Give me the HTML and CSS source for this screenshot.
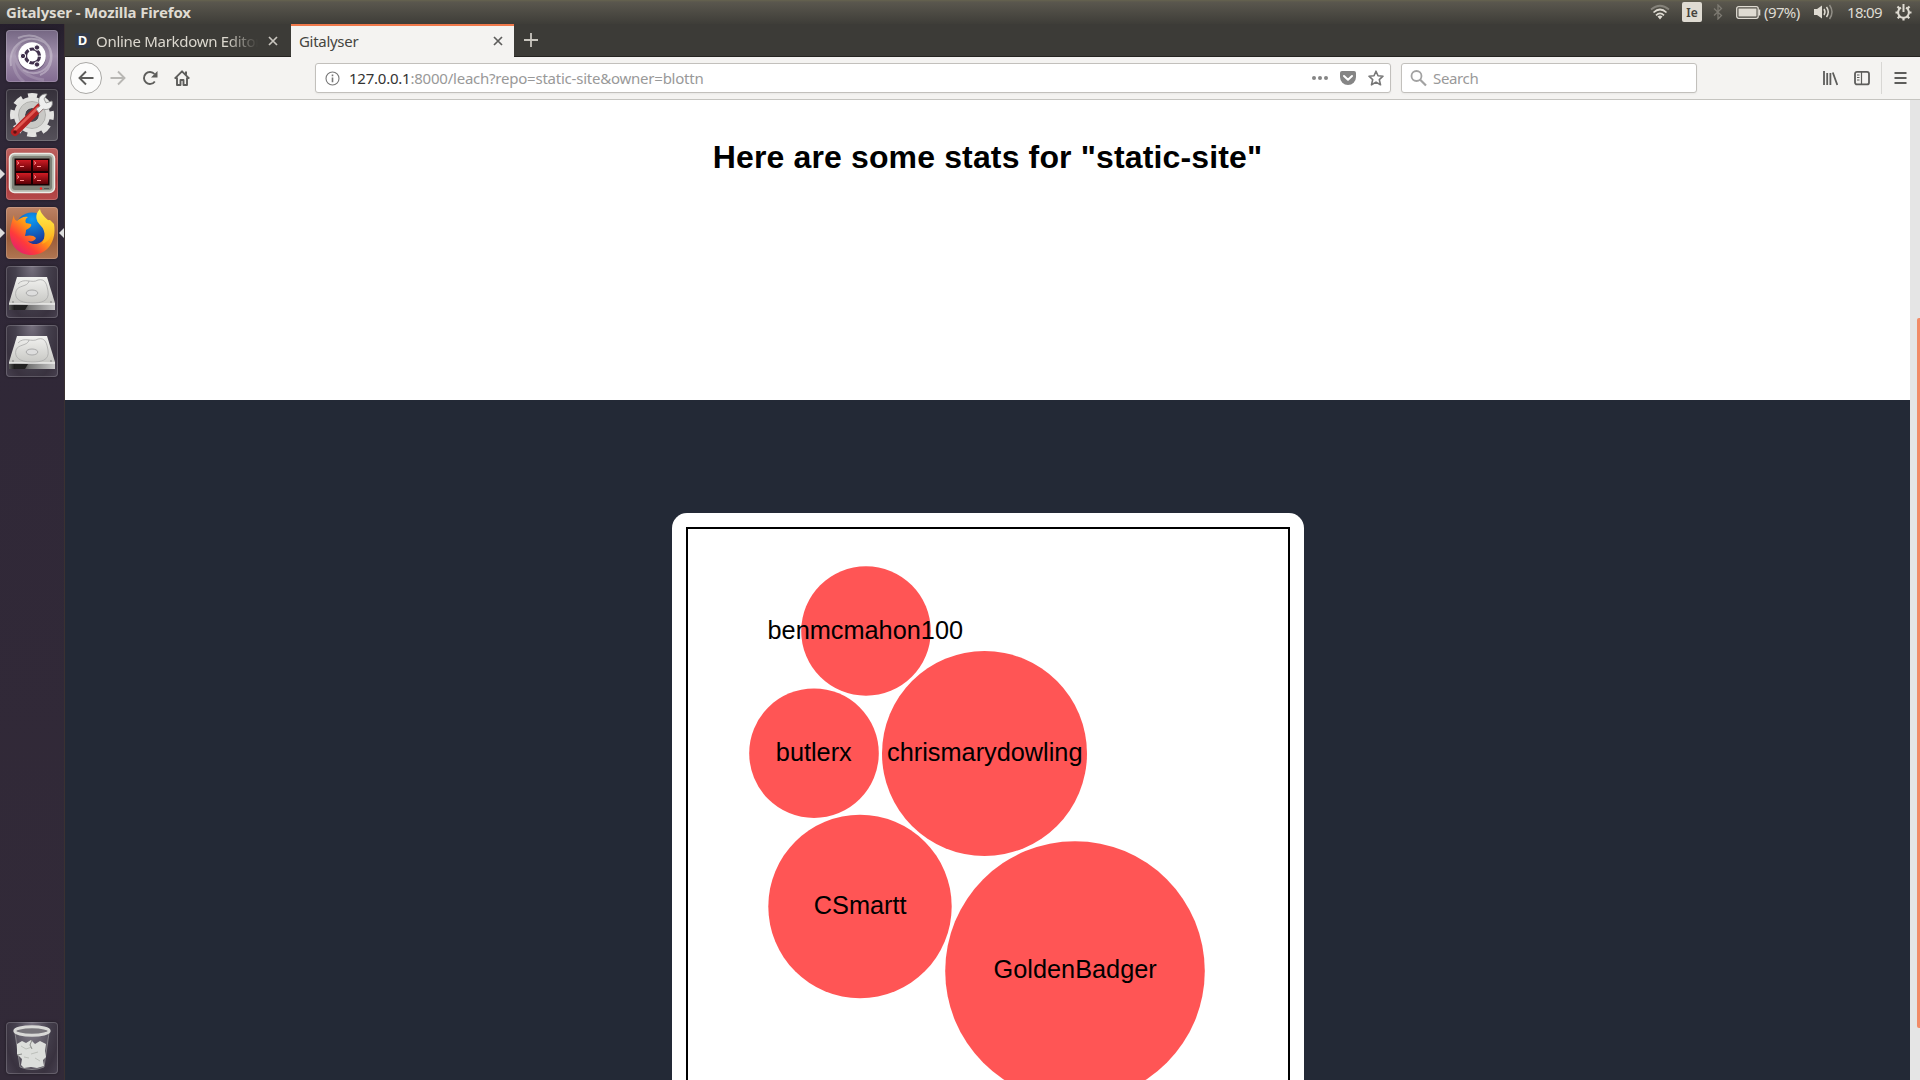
FILE: index.html
```html
<!DOCTYPE html>
<html lang="en">
<head>
<meta charset="utf-8">
<title>Gitalyser</title>
<link rel="stylesheet" href="styles.css">
</head>
<body>
<svg class="defs" aria-hidden="true">
  <defs>
    <linearGradient id="metal" x1="0" y1="0" x2="0" y2="1"><stop offset="0" stop-color="#f2f2f0"/><stop offset="1" stop-color="#bdbdb9"/></linearGradient>
    <linearGradient id="handle" x1="0" y1="0" x2="1" y2="1"><stop offset="0" stop-color="#e8544c"/><stop offset="1" stop-color="#a81c1c"/></linearGradient>
    <linearGradient id="screen" x1="0" y1="0" x2="0" y2="1"><stop offset="0" stop-color="#d01c24"/><stop offset="1" stop-color="#5c0006"/></linearGradient>
    <linearGradient id="fox" x1=".9" y1=".1" x2=".15" y2=".9"><stop offset="0" stop-color="#ffe03a"/><stop offset=".45" stop-color="#ff9416"/><stop offset=".75" stop-color="#ff3b3a"/><stop offset="1" stop-color="#e5226c"/></linearGradient>
    <linearGradient id="flame" x1="0" y1="0" x2="0" y2="1"><stop offset="0" stop-color="#fff44f"/><stop offset="1" stop-color="#ffab18"/></linearGradient>
    <radialGradient id="globe" cx=".5" cy=".2" r=".8"><stop offset="0" stop-color="#0a9bf5"/><stop offset="1" stop-color="#1d2f8f"/></radialGradient>
    <linearGradient id="edge"><stop offset="0" stop-color="#555"/><stop offset=".15" stop-color="#111"/><stop offset=".45" stop-color="#777"/><stop offset="1" stop-color="#c8c8c8"/></linearGradient>
    <symbol id="drive" viewBox="0 0 52 52">
      <path d="M11 11H41L49 37V44H3V37Z" fill="url(#metal)"/>
      <path d="M3 38.500H49V44H3Z" fill="url(#edge)"/>
      <path d="M9 39H22L19 44H9Z" fill="#222"/>
      <path d="M3 38H49" stroke="#fff"/>
      <path d="M12 18C18 11 26 18 32 14C40 12 41 20 42 25C44 36 34 37 26 37C13 37 8 32 10 25C12 19 22 21 23 15" fill="none" stroke="#aaa" stroke-width=".8"/>
      <ellipse cx="26" cy="27" rx="5.800" ry="3" fill="#ddd" stroke="#aaa"/>
      <circle cx="7" cy="36" r=".8" fill="#777"/><circle cx="45" cy="36" r=".8" fill="#777"/>
    </symbol>
  </defs>
</svg>

<header class="panel">
  <span class="panel-title">Gitalyser - Mozilla Firefox</span>
  <div class="indicators">
    <svg class="ind-wifi" width="20" height="16" viewBox="0 0 20 16" fill="none" stroke-width="1.700"><path d="M1 5.500Q10-2 19 5.500" stroke="#85827a"/><path d="M3.500 8.500Q10 2.500 16.500 8.500M6 11.300Q10 7.500 14 11.300" stroke="#dfdbd2"/><path d="M7.500 12.500Q10 10.500 12.500 12.500L10 15.500Z" fill="#dfdbd2"/></svg>
    <span class="keyboard">Ie</span>
    <svg class="ind-bt" width="10" height="16" viewBox="0 0 10 16" fill="none" stroke="#7d7a72" stroke-width="1.300"><path d="M1 4.500L8.500 11.500L5 15V1L8.500 4.500L1 11.500"/></svg>
    <svg class="ind-battery" width="25" height="13" viewBox="0 0 25 13"><rect x=".7" y=".7" width="21.500" height="11.600" rx="2" fill="none" stroke="#dfdbd2" stroke-width="1.300"/><rect x="2.500" y="2.500" width="18" height="8" fill="#dfdbd2"/><path d="M23.500 3.500V9.500" stroke="#dfdbd2" stroke-width="1.600"/></svg>
    <span class="percent">(97%)</span>
    <svg class="ind-volume" width="20" height="16" viewBox="0 0 20 16" fill="none" stroke-width="1.500"><path d="M0 5H3L8 1.500V14.500L3 11H0Z" fill="#dfdbd2"/><path d="M10 5Q12 8 10 11M12.500 3Q16 8 12.500 13" stroke="#dfdbd2"/><path d="M15.500 1Q20.500 8 15.500 15" stroke="#918e86"/></svg>
    <span class="clock">18:09</span>
    <svg class="ind-gear" width="17" height="17" viewBox="0 0 17 17" fill="none" stroke="#dfdbd2"><path d="M6 3.600A5.400 5.400 0 1 0 11 3.600" stroke-width="2"/><path d="M8.500 0V8" stroke-width="2"/><path d="M2.500 2.500L4.500 4.500M14.500 2.500L12.500 4.500M.5 8.500H3M14 8.500H16.500M2.700 14.300L4.500 12.500M14.300 14.300L12.500 12.500M8.500 14V16.500" stroke-width="2.200"/></svg>
  </div>
</header>

<div class="desktop">
  <nav class="launcher">
    <div class="tile dash"><svg width="52" height="52" viewBox="0 0 52 52"><g fill="none" stroke="#fff" opacity=".3"><path d="M5 36C2 15 20 3 38 12C50 20 47 40 34 45" stroke-width="2"/><path d="M12 8C28 1 45 10 45 27C44 40 30 48 17 40" stroke-width="2"/><path d="M7 20C10 38 20 48 38 50M18 52C5 42 4 22 14 13" stroke-width="3" opacity=".5"/></g><circle cx="26" cy="27" r="14" fill="#4a3a58" opacity=".5"/><circle cx="26" cy="26" r="13.800" fill="#fff"/><circle cx="26.500" cy="26" r="7" fill="none" stroke="#41314d" stroke-width="3.200" stroke-dasharray="13.200 1.460" stroke-dashoffset="-.7"/><g fill="#41314d" stroke="#fff"><circle cx="17" cy="26" r="2.700"/><circle cx="31" cy="17.500" r="2.700"/><circle cx="31" cy="34.500" r="2.700"/></g></svg></div>
    <div class="tile settings"><svg width="52" height="52" viewBox="0 0 52 52"><circle cx="26" cy="26" r="19" fill="none" stroke="#e3e3e1" stroke-width="6" stroke-dasharray="8.900 6.020" stroke-dashoffset="4.450"/><circle cx="26" cy="26" r="12.500" fill="none" stroke="#e0e0de" stroke-width="11"/><circle cx="26" cy="26" r="10" fill="none" stroke="#c9c9c6" stroke-width="6"/><circle cx="26" cy="26" r="13.500" fill="none" stroke="#aeaeab"/><path d="M9 43L34 18" stroke="#b52223" stroke-width="8" stroke-linecap="round"/><path d="M9 41L32 18.500" stroke="#e25a53" stroke-width="2.500" stroke-linecap="round"/><path d="M30 20L34 17C30 10 35 4 41 5L38 10L40 14L46 12C48 18 42 22 37 20L33 24Z" fill="#eee" stroke="#888" stroke-width=".8"/><circle cx="9" cy="43" r="1.700" fill="#5d1010"/></svg></div>
    <div class="tile terminal"><i class="pip left"></i><svg width="52" height="52" viewBox="0 0 52 52"><rect x="3.500" y="5.500" width="45" height="39" rx="5" fill="#b5b9ae" stroke="#ecece6" stroke-width="1.500"/><rect x="6" y="8" width="40" height="34" rx="3" fill="#7e8278"/><rect x="8.500" y="10.500" width="35" height="27" fill="#170003"/><path d="M10 12H25V23H10ZM27 12H42V23H27Z" fill="url(#screen)"/><path d="M10 25H25V36H10ZM27 25H42V36H27Z" fill="url(#screen)"/><path d="M11 13.500L13 15L11 16.500M14 18.500H18M28 13.500L30 15L28 16.500M31 18.500H35M11 27.500L13 29L11 30.500M14 32.500H18M28 27.500L30 29L28 30.500M31 32.500H35" fill="none" stroke="#ff8f91"/><circle cx="35" cy="40.500" r="1.200" fill="#f22"/><path d="M38 40.500H43" stroke="#555"/></svg></div>
    <div class="tile firefox"><i class="pip left"></i><i class="pip right"></i><svg width="52" height="52" viewBox="0 0 52 52"><circle cx="26" cy="22" r="16.500" fill="url(#globe)"/><path d="M8 8C8 12 9 13 11 14C14 11 18 9 22 10C19 12 19 14 20 16L25 17C26 19 24 21 20 23C20 26 19 28 19 29C23 28 28 28 30 31C29 34 25 35 22 34C27 40 38 37 39 28C40 22 35 17 31 14L44 13L48 17C51 34 41 48 26 48C12 48 3 38 4 23C5 17 6 14 8 8Z" fill="url(#fox)"/><path d="M34 2C28 8 30 14 35 19C41 25 38 34 36 37C45 34 48 25 46 18C43 12 35 9 34 2Z" fill="url(#flame)"/></svg></div>
    <div class="tile"><svg width="52" height="52"><use href="#drive"/></svg></div>
    <div class="tile"><svg width="52" height="52"><use href="#drive"/></svg></div>
    <div class="tile trash"><svg width="52" height="52" viewBox="0 0 52 52"><path d="M9 11L14 45Q26 50 38 45L43 11Z" fill="#fff" fill-opacity=".13" stroke="#aaa" stroke-opacity=".6"/><path d="M11 22L16 19L20 21L25 18L29 22L34 19L40 22L39 29L40 35L37 38L38 44L31 46L25 45L18 46L15 43L16 37L11 32Z" fill="#dcdedb"/><path d="M15 24L20 27L26 25M25 32L32 30M18 35L23 36M29 36L34 39" fill="none" stroke="#bcbfba"/><path d="M26 18L24 23L26 27M11 33L16 32" stroke="#8b8d8a" fill="none"/><ellipse cx="26" cy="9" rx="17.200" ry="4.200" fill="#77747a" stroke="#d8d8d6" stroke-width="3"/></svg></div>
  </nav>

  <div class="browser">
    <div class="tabs">
      <div class="tab"><span class="favicon">D</span><span class="tab-label fade">Online Markdown Editor</span><svg class="close" width="10" height="10" viewBox="0 0 10 10"><path d="M1 1L9 9M9 1L1 9"/></svg></div>
      <div class="tab active"><span class="tab-label">Gitalyser</span><svg class="close" width="10" height="10" viewBox="0 0 10 10"><path d="M1 1L9 9M9 1L1 9"/></svg></div>
      <svg class="new-tab" width="14" height="14" viewBox="0 0 14 14"><path d="M7 0V14M0 7H14"/></svg>
    </div>
    <div class="toolbar">
      <div class="back"><svg width="16" height="16" viewBox="0 0 16 16"><path d="M15.500 8H1.500M8 1.500L1.500 8L8 14.500"/></svg></div>
      <svg class="nav-icon disabled" width="16" height="16" viewBox="0 0 16 16"><path d="M.5 8H14.500M8 1.500L14.500 8L8 14.500"/></svg>
      <svg class="nav-icon" width="16" height="16" viewBox="0 0 16 16"><path d="M12.800 11.500A6 6 0 1 1 12.500 4"/><path d="M15.500 1V7.500H9Z" fill="#5d5d5b" stroke="none"/></svg>
      <svg class="nav-icon" width="16" height="16" viewBox="0 0 16 16"><path d="M.7 8.700L8 1.300L15.300 8.700M3 7.500V15H6.500V10H9.500V15H13V7.500" stroke-linejoin="round"/><path d="M11 1.500H13V5.500L11 3.500Z" fill="#5d5d5b" stroke="none"/></svg>
      <div class="field url">
        <svg width="15" height="15" viewBox="0 0 15 15" fill="none" stroke="#777" stroke-width="1.100"><circle cx="7.500" cy="7.500" r="6.500"/><path d="M7.500 6.500V11.300M7.500 3.500V5.200" stroke-width="1.600"/></svg>
        <span class="address"><b>127.0.0.1</b>:8000/leach?repo=static-site&amp;owner=blottn</span>
        <div class="url-actions">
          <svg width="16" height="16" viewBox="0 0 16 16" fill="#858585"><circle cx="2" cy="8" r="2"/><circle cx="8" cy="8" r="2"/><circle cx="14" cy="8" r="2"/></svg>
          <svg width="16" height="16" viewBox="0 0 16 16"><path d="M2 1H14Q16 1 16 3V7A8 8 0 0 1 0 7V3Q0 1 2 1Z" fill="#858585"/><path d="M4 6L8 9.800L12 6" fill="none" stroke="#fff" stroke-width="2" stroke-linecap="round" stroke-linejoin="round"/></svg>
          <svg width="16" height="16" viewBox="0 0 16 16"><path d="M8 1.200L10 5.800L15 6.200L11.300 9.600L12.500 14.800L8 12.100L3.500 14.800L4.700 9.600L1 6.200L6 5.800Z" fill="none" stroke="#777" stroke-width="1.600" stroke-linejoin="round"/></svg>
        </div>
      </div>
      <div class="field search"><svg width="17" height="17" viewBox="0 0 17 17" fill="none" stroke="#a2a2a2" stroke-width="1.800"><circle cx="6.500" cy="6" r="5"/><path d="M10 9.500L16 15.500" stroke-width="2.200"/></svg><span class="placeholder">Search</span></div>
      <div class="tools">
        <svg width="16" height="16" viewBox="0 0 16 16" fill="none" stroke="#5d5d5b" stroke-width="1.800"><path d="M2 1V15M5.200 3V15M8.400 3V15M10.800 2.500L15.300 15"/></svg>
        <svg width="16" height="16" viewBox="0 0 16 16" fill="none" stroke="#5d5d5b" stroke-width="1.800"><rect x="1" y="1.800" width="14" height="12.600" rx="2"/><path d="M7.500 2V14" stroke-width="1.200"/><path d="M3 5H5.500M3 7.500H5.500M3 10H5.500" stroke-width="1"/></svg>
        <i class="divider"></i>
        <svg width="13" height="16" viewBox="0 0 13 16" stroke="#5d5d5b" stroke-width="2"><path d="M.5 3H12.500M.5 8H12.500M.5 13H12.500"/></svg>
      </div>
    </div>
    <div class="viewport">
      <main class="page">
        <section class="intro"><h1>Here are some stats for "static-site"</h1></section>
        <section class="stats">
          <div class="card">
            <svg class="chart" width="600" height="600" viewBox="0 0 600 600">
              <g class="bubble"><circle cx="178" cy="102" r="64.800"/><text x="177.300" y="110">benmcmahon100</text></g>
              <g class="bubble"><circle cx="126" cy="224.200" r="64.800"/><text x="125.800" y="232">butlerx</text></g>
              <g class="bubble"><circle cx="296.500" cy="224.500" r="102.500"/><text x="296.800" y="232">chrismarydowling</text></g>
              <g class="bubble"><circle cx="172" cy="377.500" r="91.700"/><text x="172.200" y="385">CSmartt</text></g>
              <g class="bubble"><circle cx="387" cy="442" r="129.800"/><text x="387.200" y="449">GoldenBadger</text></g>
            </svg>
          </div>
        </section>
      </main>
      <div class="scrollbar"><i class="thumb"></i></div>
    </div>
  </div>
</div>
</body>
</html>
```

FILE: styles.css
```css
* { box-sizing: border-box; }
body { margin: 0; width: 1920px; height: 1080px; overflow: hidden; display: flex; flex-direction: column; font: 15px/1 "Noto Sans", sans-serif; background: #fff; }
svg { display: block; flex: none; }
.defs { display: block; position: absolute; width: 0; height: 0; }

.panel { height: 24px; flex: none; display: flex; align-items: center; justify-content: space-between; padding: 0 8px 0 6px; background: linear-gradient(#66634f 0, #5a574e 2px, #3e3d38 24px); color: #dfdbd2; }
.panel-title { font-weight: 700; letter-spacing: -.13px; }
.indicators { display: flex; align-items: center; }
.keyboard { width: 20px; height: 20px; margin: 0 11px 0 12px; border-radius: 2px; background: #dfdbd2; color: #45433d; font-size: 12px; font-weight: 600; line-height: 21px; text-align: center; }
.ind-bt { margin-right: 13px; }
.ind-battery { margin-right: 3px; }
.percent { width: 50px; letter-spacing: -.6px; }
.clock { width: 48px; margin-left: 13px; letter-spacing: -.7px; }

.desktop { flex: 1; display: flex; min-height: 0; }
.launcher { width: 65px; flex: none; display: flex; flex-direction: column; gap: 7px; padding: 6px 0 6px 6px; background: linear-gradient(#251e2c, #2f2737 40px, #322a38); border-right: 1px solid #3a3132; }
.tile { position: relative; width: 52px; height: 52px; flex: none; border-radius: 4px; background: radial-gradient(ellipse at 50% 0, #77717f 0, #45404d 45%, #39323f 75%, #484150); box-shadow: inset 0 0 0 1px rgba(255,255,255,.18), 0 0 3px rgba(0,0,0,.4); }
.dash { background: linear-gradient(#756783, #a08fab 50%, #826b91); }
.settings { background: linear-gradient(#35303a, #55515a); }
.terminal { background: linear-gradient(#bd625f, #a6383a 60%, #b64a4a); }
.firefox { background: linear-gradient(#bd8264, #9b5c39 60%, #b07652); }
.trash { margin-top: auto; }
.pip { position: absolute; top: 21px; border: 5px solid transparent; }
.pip.left { left: -6px; border-left-color: #ddd; border-right: 0; }
.pip.right { right: -6px; border-right-color: #ddd; border-left: 0; }

.browser { flex: 1; min-width: 0; display: flex; flex-direction: column; }
.tabs { height: 33px; flex: none; display: flex; background: #3c3b37; border-bottom: 1px solid #252421; color: #dcd8cf; }
.tab { width: 226px; display: flex; align-items: center; padding: 1px 13px 0 10px; }
.tab.active { width: 223px; height: 33px; padding: 0 11px 1px 8px; border-top: 2px solid #f0794b; background: #f4f3f1; color: #45453f; }
.favicon { width: 15px; height: 15px; margin-right: 6px; border-radius: 2px; background: #333a49; color: #fff; font-size: 13px; font-weight: 700; line-height: 15px; text-align: center; }
.tab-label { flex: 1; line-height: 20px; letter-spacing: -.3px; white-space: nowrap; overflow: hidden; }
.fade { margin-right: 10px; mask-image: linear-gradient(to right, #000 130px, transparent); }
.close { fill: none; stroke: #c9c6bf; stroke-width: 1.700; }
.active .close { stroke: #5d5d5b; }
.new-tab { margin: 9px 0 0 10px; fill: none; stroke: #c9c6bf; stroke-width: 1.800; }

.toolbar { height: 43px; flex: none; display: flex; align-items: center; padding: 0 13px 0 5px; background: #f4f3f1; border-bottom: 1px solid #c5c4c0; }
.back { width: 32px; height: 32px; margin-right: 8px; border: 1px solid #aaa9a6; border-radius: 50%; background: #fcfcfb; display: grid; place-items: center; }
.back svg, .nav-icon { fill: none; stroke: #5d5d5b; stroke-width: 1.900; }
.nav-icon { margin-right: 16px; }
.nav-icon.disabled { stroke: #b8b7b4; }
.field { height: 30px; display: flex; align-items: center; border: 1px solid #c2c0bc; border-radius: 3px; background: #fff; color: #999; box-shadow: 0 1px 2px rgba(0,0,0,.05); }
.url { width: 1076px; margin: 0 10px 0 109px; padding: 0 6px 0 9px; }
.address { margin-left: 9px; padding-top: 1px; letter-spacing: -.23px; white-space: nowrap; }
.address b { color: #333; font-weight: 400; }
.url-actions { display: flex; gap: 12px; margin-left: auto; }
.search { width: 296px; padding-left: 8px; gap: 6px; letter-spacing: -.35px; }
.placeholder { padding-top: 1px; }
.tools { margin-left: auto; height: 100%; display: flex; align-items: center; gap: 16px; }
.divider { width: 1px; height: 32px; margin: 0 -4px 0 -5px; background: #d8d7d4; }

.viewport { flex: 1; min-height: 0; display: flex; }
.page { flex: 1; min-width: 0; overflow: hidden; font-family: "Liberation Sans", sans-serif; }
.intro { height: 300px; padding-top: 39px; background: #fff; text-align: center; }
h1 { margin: 0; font-size: 32px; line-height: 37px; letter-spacing: .14px; color: #000; }
.stats { height: 900px; padding-top: 113px; background: #232936; }
.card { width: 632px; height: 700px; margin: 0 auto; padding: 14px; border-radius: 15px; background: #fff; }
.chart { box-sizing: content-box; margin: 0 auto; border: 2px solid #000; }
.bubble circle { fill: #f55; }
.bubble text { font-size: 25.3px; text-anchor: middle; fill: #000; }
.scrollbar { width: 10px; flex: none; padding: 218px 0 0 7px; background: #e5e5e5; }
.thumb { display: block; height: 710px; border-radius: 2px 0 0 2px; background: #f28b67; }
```
